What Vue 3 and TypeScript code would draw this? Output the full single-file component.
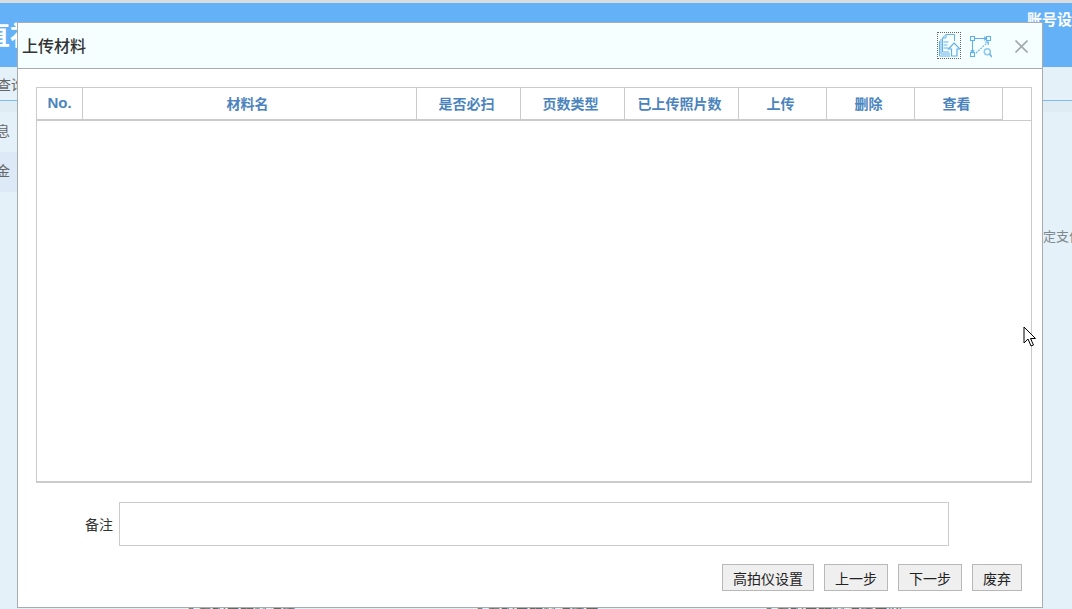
<script setup lang="ts">
interface Col { label: string; width: number }
const cols: Col[] = [
  { label: 'No.', width: 46 },
  { label: '材料名', width: 334 },
  { label: '是否必扫', width: 104 },
  { label: '页数类型', width: 104 },
  { label: '已上传照片数', width: 114 },
  { label: '上传', width: 88 },
  { label: '删除', width: 88 },
  { label: '查看', width: 88 },
]
const buttons: string[] = ['高拍仪设置', '上一步', '下一步', '废弃']
const behind: string[] = ['查看相关材料详情', '查看相关材料详情内', '查看相关材料详情内容']
</script>

<template>
  <div class="page">
    <header class="topbar">
      <span class="brand">直补</span>
      <span class="account">账号设置</span>
    </header>
    <nav class="tabs"><span class="tab">查询</span></nav>
    <div class="strip"></div>
    <div class="content">
      <aside class="side">
        <div class="side-item">信息</div>
        <div class="side-item active">资金</div>
      </aside>
      <main class="main">
        <p class="pay-note">确定支付</p>
        <div class="behind-row">
          <span v-for="t in behind" :key="t" class="behind-cell">{{ t }}</span>
        </div>
      </main>
    </div>

    <section class="dialog">
      <div class="dialog-head">
        <h2 class="dialog-title">上传材料</h2>
        <div class="tools">
          <span class="tool selected">
            <svg width="22" height="25" viewBox="0 0 22 25" fill="none" stroke="#62b0ea" stroke-width="1">
              <path d="M4.500 5L8 1.500H16.500V8M4.500 5V19H11M8 1.500V5H4.500" />
              <path d="M3 6V21H12M1.500 8V23H12" />
              <path d="M5.500 9h5M5.500 12h4M5.500 15h5" />
              <path d="M16 10l6 6h-3v7h-5.500v-7H10.500z" stroke-width="1.200" />
            </svg>
          </span>
          <span class="tool plain">
            <svg width="22" height="22" viewBox="0 0 22 22" fill="none" stroke="#62b0ea" stroke-width="1.1">
              <rect x="0.500" y="0.500" width="4" height="4" />
              <rect x="16.500" y="0.500" width="4" height="4" />
              <rect x="0.500" y="16.500" width="4" height="4" />
              <path d="M4.500 2.500h12M14 0.800l2.500 1.700-2.500 1.700M2.500 4.500v12M0.800 14l1.700 2.500 1.700-2.500" />
              <path d="M6 17L18 6" stroke-dasharray="2 1" />
              <path d="M15 6h3.200v3" />
              <circle cx="17.300" cy="15.700" r="3" stroke="#8cc8f0" stroke-width="1.500" />
              <path d="M19.500 18l2.500 3" stroke-width="1.500" />
            </svg>
          </span>
          <button class="close" type="button" aria-label="关闭">
            <svg width="13" height="13" viewBox="0 0 13 13" stroke="#a3a9a9" stroke-width="1.600">
              <path d="M0.500 0.500l12 12M12.500 0.500l-12 12" />
            </svg>
          </button>
        </div>
      </div>

      <div class="dialog-body">
        <div class="grid">
          <div class="grid-head">
            <div v-for="c in cols" :key="c.label" class="th" :style="{ width: c.width + 'px' }">{{ c.label }}</div>
          </div>
        </div>

        <div class="remark">
          <label class="remark-label">备注</label>
          <div class="remark-input"></div>
        </div>

        <div class="actions">
          <button v-for="b in buttons" :key="b" class="btn" type="button">{{ b }}</button>
        </div>
      </div>
    </section>

    <svg class="cursor" width="14" height="22" viewBox="0 0 14 22">
      <path d="M1 1v16l4-4 3 7 2.500-1-3-6.500H12.500z" fill="#fff" stroke="#000" stroke-width="1" />
    </svg>
  </div>
</template>

<style>
html, body { margin: 0; padding: 0; overflow: hidden; }
</style>

<style scoped>
.page {
  position: relative;
  width: 1072px;
  height: 609px;
  overflow: hidden;
  background: #e5f1f8;
  font-family: "Liberation Sans", "Noto Sans CJK SC", sans-serif;
  font-size: 14px;
  color: #333;
}
.topbar {
  height: 64px;
  border-top: 3px solid #d9dcdc;
  background: #65b1f7;
  display: flex;
  justify-content: space-between;
  color: #fff;
  overflow: hidden;
}
.brand {
  margin: 18px 0 0 -16px;
  font-size: 26px;
  font-weight: 700;
  line-height: 30px;
  white-space: nowrap;
}
.account {
  margin: 7px -15px 0 0;
  font-size: 15px;
  font-weight: 700;
  line-height: 20px;
  white-space: nowrap;
  flex: none;
}
.tabs {
  height: 33px;
  background: #e5f1f8;
  border-bottom: 1px solid #7cbcf0;
  overflow: hidden;
}
.tab { display: block; margin: 8px 0 0 -3px; color: #666; line-height: 20px; }
.strip { height: 11px; background: #dfecf4; }
.content { display: flex; }
.side { width: 17px; flex: none; overflow: hidden; }
.side-item {
  margin-left: -18px;
  height: 40px;
  line-height: 38px;
  color: #666;
  white-space: nowrap;
  font-size: 14px;
}
.side-item.active { background: #dde9f7; }
.main { flex: 1; min-width: 0; }
.pay-note {
  margin: 115px 0 0 1013px;
  white-space: nowrap;
  font-size: 13px;
  line-height: 20px;
  color: #7d8a90;
}
.behind-row {
  display: flex;
  margin: 356px 0 0 167px;
  color: #666;
  font-size: 14px;
  line-height: 18px;
  white-space: nowrap;
}
.behind-cell { flex: none; width: 289px; }
.dialog {
  position: absolute;
  left: 17px;
  top: 22px;
  width: 1026px;
  height: 586px;
  box-sizing: border-box;
  border: 1px solid #a9acae;
  background: #fff;
  display: flex;
  flex-direction: column;
}
.dialog-head {
  height: 46px;
  box-sizing: border-box;
  flex: none;
  background: #f5ffff;
  border-bottom: 1px solid #a9acae;
  display: flex;
  align-items: center;
  justify-content: space-between;
  padding: 0 14px 0 4px;
}
.dialog-title {
  margin: 0 0 2px;
  font-size: 16px;
  font-weight: 500;
  color: #333;
}
.tools { display: flex; align-items: center; }
.tool { display: flex; box-sizing: border-box; }
.tool.selected { width: 24px; height: 27px; margin-right: 9px; border: 1px dotted #666; }
.tool.plain { width: 22px; height: 22px; margin-top: 3px; }
.close { margin: 1px 0 0 23px; padding: 0; border: 0; background: none; display: flex; }
.dialog-body { flex: 1; display: flex; flex-direction: column; padding: 18px 10px 0 18px; }
.grid {
  height: 396px;
  box-sizing: border-box;
  border: 1px solid #cbcbcb;
  border-bottom-width: 2px;
}
.grid-head {
  height: 33px;
  box-sizing: border-box;
  display: flex;
  border-bottom: 1px solid #cbcbcb;
}
.th {
  box-sizing: border-box;
  height: 32px;
  padding: 0 4px 2px 0;
  border-right: 1px solid #cbcbcb;
  border-bottom: 1px solid #cbcbcb;
  display: flex;
  align-items: center;
  justify-content: center;
  font-weight: 700;
  font-size: 14px;
  color: #4b84bd;
}
.th:first-child { padding-right: 0; font-size: 15px; }
.remark { display: flex; align-items: center; margin: 19px 0 0 49px; }
.remark-label { width: 28px; margin-right: 6px; font-size: 14px; color: #333; white-space: nowrap; }
.remark-input { width: 830px; height: 44px; box-sizing: border-box; border: 1px solid #cbcbcb; }
.actions { display: flex; justify-content: flex-end; gap: 10px; margin-top: 18px; padding-right: 10px; }
.btn {
  height: 27px;
  box-sizing: border-box;
  padding: 0 10px;
  border: 1px solid #b8b8b8;
  background: #efefef;
  font-family: inherit;
  font-size: 14px;
  color: #222;
}
.cursor { position: absolute; left: 1023px; top: 326px; }
</style>
